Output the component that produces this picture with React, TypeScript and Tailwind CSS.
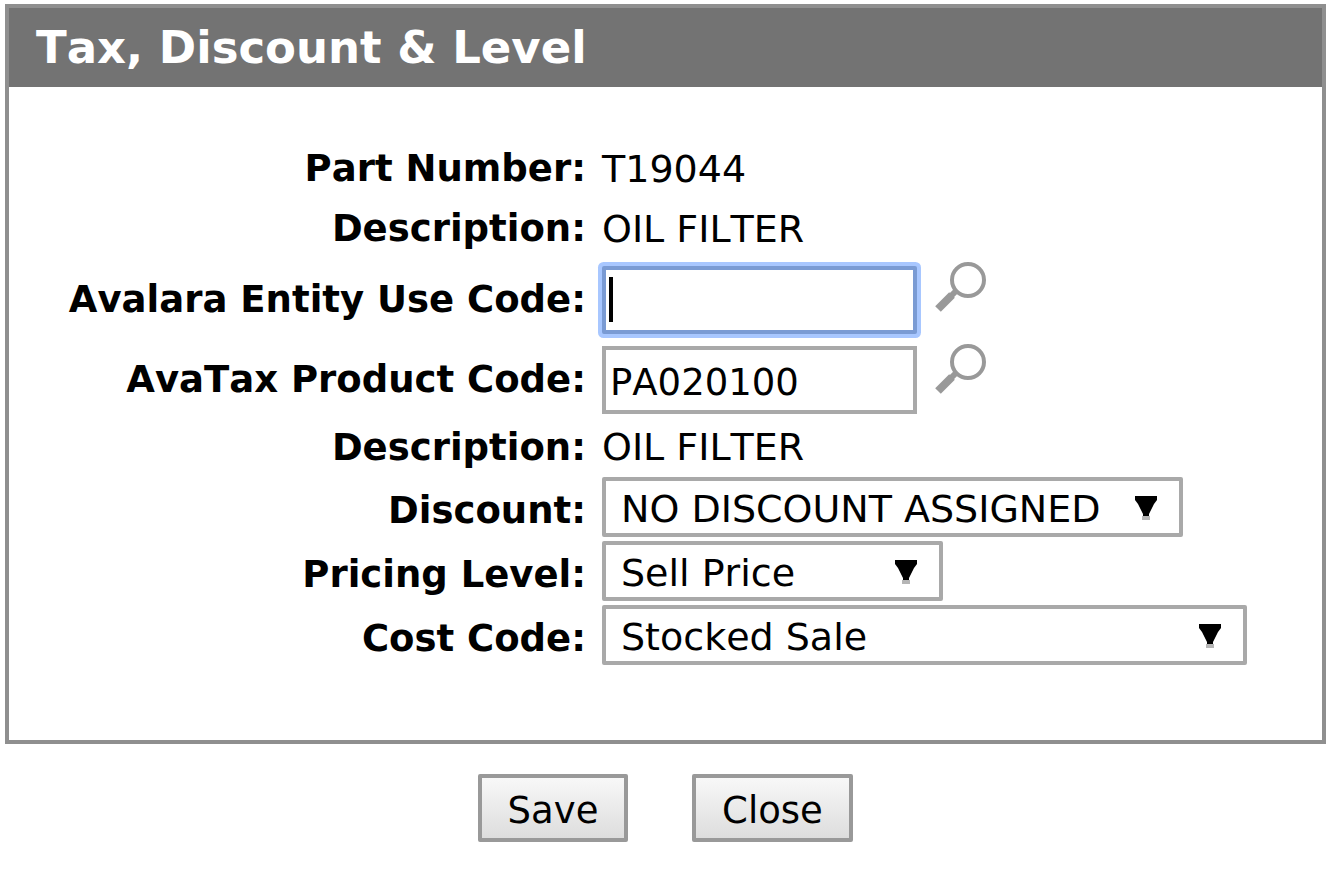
import { useState } from 'react';
import type { ReactNode } from 'react';

type RowProps = {
  label: string;
  htmlFor?: string;
  className: string;
  labelClassName?: string;
  children: ReactNode;
};

function Row({ label, htmlFor, className, labelClassName = '', children }: RowProps) {
  const text = `text-right text-[37px] font-bold ${labelClassName}`;

  return (
    <div className={`grid grid-cols-[577px_1fr] items-center gap-x-4 whitespace-nowrap ${className}`}>
      {htmlFor ? (
        <label htmlFor={htmlFor} className={text}>
          {label}
        </label>
      ) : (
        <span className={text}>{label}</span>
      )}
      {children}
    </div>
  );
}

function LookupButton({ label }: { label: string }) {
  return (
    <button type="button" aria-label={label} className="mt-0.5 self-start">
      <svg width="52" height="52" viewBox="0 0 52 52" fill="none" stroke="#999999">
        <circle cx="33" cy="19" r="16" strokeWidth="4" />
        <path d="M22 29L13 38" strokeWidth="6" />
        <path d="M17 34L3 48" strokeWidth="8" />
      </svg>
    </button>
  );
}

type SelectProps = {
  id: string;
  options: string[];
  className: string;
};

function Select({ id, options, className }: SelectProps) {
  return (
    <div className={`relative ${className}`}>
      <select
        id={id}
        className="h-[60px] w-full appearance-none rounded-xs border-4 border-[#a9a9a9] bg-white pt-1 pl-[15px] text-[38px] leading-none outline-none"
      >
        {options.map((option) => (
          <option key={option}>{option}</option>
        ))}
      </select>
      <svg
        width="22"
        height="24"
        viewBox="0 0 22 24"
        className="pointer-events-none absolute top-[19px] right-[26px]"
      >
        <path d="M0 0H22V4L19 8L14 18V20H8V18L3 8L0 4Z" />
        <path d="M7 20H15V24H7Z" fill="#b5b5b5" />
      </svg>
    </div>
  );
}

const inputClass = 'h-[68px] w-full border-4 bg-white pt-1 pl-1 text-[37px] leading-none outline-none';
const buttonClass =
  'h-[68px] rounded-xs border-4 border-[#999999] bg-linear-to-b from-[#f8f8f8] to-[#dddddd] pt-1 text-[37px] leading-none';

export default function App() {
  const [entityCode, setEntityCode] = useState('');
  const [productCode, setProductCode] = useState('PA020100');

  return (
    <form
      className="bg-white pt-1 pr-px pl-[5px] font-['DejaVu_Sans',Verdana,sans-serif] text-black [font-kerning:none]"
      onSubmit={(e) => e.preventDefault()}
    >
      <section className="border-4 border-[#8f8f8f]">
        <h1 className="bg-[#737373] pl-[27px] text-[45px] leading-[79px] font-bold text-white">
          Tax, Discount &amp; Level
        </h1>

        <div className="pt-[52px] pb-[73px]">
          <Row label="Part Number:" className="h-[60px]">
            <span className="text-[38px]">T19044</span>
          </Row>
          <Row label="Description:" className="h-[60px]">
            <span className="text-[38px]">OIL FILTER</span>
          </Row>
          <Row label="Avalara Entity Use Code:" htmlFor="entity-code" className="h-[82px]">
            <div className="flex h-full items-center gap-[18px]">
              <div className="relative w-[315px]">
                <input
                  id="entity-code"
                  type="text"
                  value={entityCode}
                  onChange={(e) => setEntityCode(e.target.value)}
                  className={`${inputClass} rounded-xs border-[#7a9bd4] caret-transparent ring-4 ring-[#a8c7ff]`}
                />
                {entityCode === '' ? (
                  <span className="pointer-events-none absolute top-[11px] left-[7px] h-[45px] w-1 bg-black" />
                ) : null}
              </div>
              <LookupButton label="Find entity use code" />
            </div>
          </Row>
          <Row label="AvaTax Product Code:" htmlFor="product-code" className="h-[78px]">
            <div className="flex h-full items-center gap-[18px]">
              <div className="w-[315px]">
                <input
                  id="product-code"
                  type="text"
                  value={productCode}
                  onChange={(e) => setProductCode(e.target.value)}
                  className={`${inputClass} border-[#a9a9a9]`}
                />
              </div>
              <LookupButton label="Find product code" />
            </div>
          </Row>
          <Row label="Description:" className="h-14">
            <span className="text-[38px]">OIL FILTER</span>
          </Row>
          <Row label="Discount:" htmlFor="discount" className="h-16" labelClassName="pt-2">
            <Select id="discount" options={['NO DISCOUNT ASSIGNED']} className="w-[581px]" />
          </Row>
          <Row label="Pricing Level:" htmlFor="pricing-level" className="h-16" labelClassName="pt-2">
            <Select id="pricing-level" options={['Sell Price']} className="w-[341px]" />
          </Row>
          <Row label="Cost Code:" htmlFor="cost-code" className="h-16" labelClassName="pt-2">
            <Select id="cost-code" options={['Stocked Sale']} className="w-[645px]" />
          </Row>
        </div>
      </section>

      <div className="flex justify-center gap-16 pt-[30px]">
        <button type="submit" className={`${buttonClass} w-[150px]`}>
          Save
        </button>
        <button type="button" className={`${buttonClass} w-[161px]`}>
          Close
        </button>
      </div>
    </form>
  );
}
